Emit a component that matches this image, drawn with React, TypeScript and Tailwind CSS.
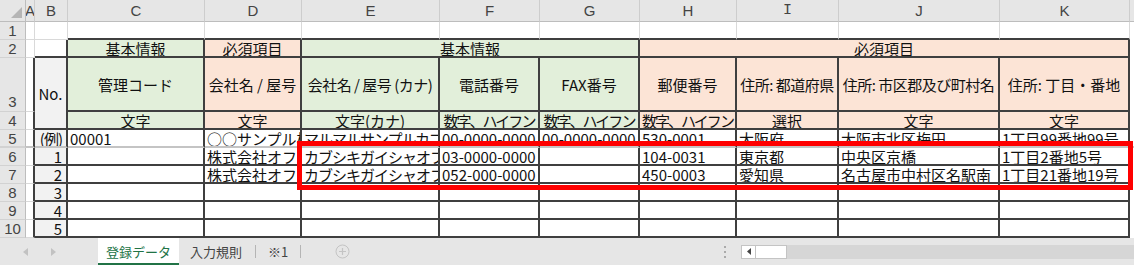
import type { ReactNode } from "react";

const cx = (...c: (string | false | undefined)[]) => c.filter(Boolean).join(" ");

const GREEN = "bg-[#e2efda]";
const PEACH = "bg-[#fce4d6]";
const NUMBG = "bg-[#f2f2f2]";

// cell borders: tb = table (dark), gl = sheet gridline
const tb = "border-r-2 border-b-2 border-r-[#3f3f3f] border-b-[#3f3f3f]";
const tbFreeze = "border-r-2 border-b-2 border-r-[#3f3f3f] border-b-[#c4c4c4]";
const gl = "border-r border-b border-r-[#d9d9d9] border-b-[#d9d9d9]";
const rh = "justify-center bg-[#e6e6e6] border-r border-b border-r-[#bdbdbd] border-b-[#d2d2d2] font-['Liberation_Sans',sans-serif] text-[15px] text-[#444]";

function Cell({ className, children }: { className?: string; children?: ReactNode }) {
  return (
    <div className={cx("flex min-w-0 items-center overflow-hidden whitespace-nowrap leading-[15px]", className)}>
      {children}
    </div>
  );
}

const COLS = ["A", "B", "C", "D", "E", "F", "G", "H", "I", "J", "K"];

type Row = { no: string; c?: string; d?: string; e?: string; f?: string; g?: string; h?: string; i?: string; j?: string; k?: string };

const ROWS: Row[] = [
  {
    no: "(例)",
    c: "00001",
    d: "○○サンプル株式会社",
    e: "マルマルサンプルカブシキガイシャ",
    f: "00-0000-0000",
    g: "00-0000-0000",
    h: "530-0001",
    i: "大阪府",
    j: "大阪市北区梅田",
    k: "1丁目99番地99号",
  },
  {
    no: "1",
    d: "株式会社オフィスサンプル",
    e: "カブシキガイシャオフィスサンプル",
    f: "03-0000-0000",
    h: "104-0031",
    i: "東京都",
    j: "中央区京橋",
    k: "1丁目2番地5号",
  },
  {
    no: "2",
    d: "株式会社オフィスサンプル",
    e: "カブシキガイシャオフィスサンプル",
    f: "052-000-0000",
    h: "450-0003",
    i: "愛知県",
    j: "名古屋市中村区名駅南",
    k: "1丁目21番地19号",
  },
  { no: "3" },
  { no: "4" },
  { no: "5" },
];

function Sheet() {
  return (
    <div className="grid grid-cols-[26px_9px_33px_137px_97px_138px_100px_100px_97px_102px_161px_130px_1fr] grid-rows-[22px_18px_18px_54px_18px_18px_18px_18px_18px_18px_18px] bg-white font-['Noto_Sans_CJK_JP',sans-serif] text-[15px] text-[#111]">
      {/* column headers */}
      <Cell className="justify-end items-end bg-[#e6e6e6] border-r border-b border-r-[#bdbdbd] border-b-[#bdbdbd] pr-[3px] pb-[3px]">
        <svg width="11" height="11" viewBox="0 0 11 11">
          <polygon points="11,0 11,11 0,11" fill="#b5b5b5" />
        </svg>
      </Cell>
      {COLS.map((l) => (
        <Cell
          key={l}
          className={cx(
            "justify-center bg-[#e6e6e6] border-r border-b border-r-[#cdcdcd] border-b-[#bdbdbd] text-[15px] text-[#444]",
            l === "I" ? "font-['Liberation_Mono',monospace]" : "font-['Liberation_Sans',sans-serif]",
          )}
        >
          {l}
        </Cell>
      ))}
      <Cell className="bg-[#e6e6e6] border-b border-b-[#bdbdbd]" />

      {/* row 1 */}
      <Cell className={rh}>1</Cell>
      <Cell className={gl} />
      <Cell className={gl} />
      {COLS.slice(2).map((l) => (
        <Cell key={l} className="border-r border-b-2 border-r-[#d9d9d9] border-b-[#3f3f3f]" />
      ))}
      <Cell />

      {/* row 2 */}
      <Cell className={rh}>2</Cell>
      <Cell className={gl} />
      <Cell className={tb} />
      <Cell className={cx(tb, GREEN, "justify-center")}>基本情報</Cell>
      <Cell className={cx(tb, PEACH, "justify-center")}>必須項目</Cell>
      <Cell className={cx(tb, GREEN, "col-span-3 justify-center")}>基本情報</Cell>
      <Cell className={cx(tb, PEACH, "col-span-4 justify-center")}>必須項目</Cell>
      <Cell />

      {/* row 3 */}
      <Cell className={cx(rh, "items-end pb-[2px]")}>3</Cell>
      <Cell className="border-r-2 border-b border-r-[#3f3f3f] border-b-[#d9d9d9]" />
      <Cell className={cx(tb, NUMBG, "row-span-2 justify-center")}>No.</Cell>
      <Cell className={cx(tb, GREEN, "justify-center")}>管理コード</Cell>
      <Cell className={cx(tb, PEACH, "justify-center")}>会社名 / 屋号</Cell>
      <Cell className={cx(tb, GREEN, "justify-center tracking-[-0.5px]")}>会社名 / 屋号 (カナ)</Cell>
      <Cell className={cx(tb, GREEN, "justify-center")}>電話番号</Cell>
      <Cell className={cx(tb, GREEN, "justify-center")}>FAX番号</Cell>
      <Cell className={cx(tb, PEACH, "justify-center")}>郵便番号</Cell>
      <Cell className={cx(tb, PEACH, "justify-center tracking-[-0.5px]")}>住所: 都道府県</Cell>
      <Cell className={cx(tb, PEACH, "justify-center tracking-[-0.5px]")}>住所: 市区郡及び町村名</Cell>
      <Cell className={cx(tb, PEACH, "justify-center")}>住所: 丁目・番地</Cell>
      <Cell />

      {/* row 4 */}
      <Cell className={rh}>4</Cell>
      <Cell className="border-r-2 border-b border-r-[#3f3f3f] border-b-[#d9d9d9]" />
      <Cell className={cx(tb, GREEN, "justify-center")}>文字</Cell>
      <Cell className={cx(tb, PEACH, "justify-center")}>文字</Cell>
      <Cell className={cx(tb, GREEN, "justify-center")}>文字(カナ)</Cell>
      <Cell className={cx(tb, GREEN, "justify-center tracking-[-2px]")}>数字、ハイフン</Cell>
      <Cell className={cx(tb, GREEN, "justify-center tracking-[-2px]")}>数字、ハイフン</Cell>
      <Cell className={cx(tb, PEACH, "justify-center tracking-[-2px]")}>数字、ハイフン</Cell>
      <Cell className={cx(tb, PEACH, "justify-center")}>選択</Cell>
      <Cell className={cx(tb, PEACH, "justify-center")}>文字</Cell>
      <Cell className={cx(tb, PEACH, "justify-center")}>文字</Cell>
      <Cell />

      {/* rows 5-10 */}
      {ROWS.map((r, idx) => {
        const freeze = idx === 0;
        const b = freeze ? tbFreeze : tb;
        const txt = "pl-[2px]";
        return [
          <Cell key={`rh${idx}`} className={cx(rh, freeze && "border-b-2 border-b-[#c4c4c4]")}>
            {idx + 5}
          </Cell>,
          <Cell
            key={`a${idx}`}
            className={cx(
              "border-r-2 border-r-[#3f3f3f]",
              freeze ? "border-b-2 border-b-[#c4c4c4]" : "border-b border-b-[#d9d9d9]",
            )}
          />,
          <Cell key={`b${idx}`} className={cx(b, NUMBG, "justify-end pr-[4px]", freeze && "tracking-[-1px]")}>
            {r.no}
          </Cell>,
          <Cell key={`c${idx}`} className={cx(b, txt)}>{r.c}</Cell>,
          <Cell key={`d${idx}`} className={cx(b, txt)}>{r.d}</Cell>,
          <Cell key={`e${idx}`} className={cx(b, txt, "tracking-[-1px]")}>{r.e}</Cell>,
          <Cell key={`f${idx}`} className={cx(b, txt)}>{r.f}</Cell>,
          <Cell key={`g${idx}`} className={cx(b, txt)}>{r.g}</Cell>,
          <Cell key={`h${idx}`} className={cx(b, txt)}>{r.h}</Cell>,
          <Cell key={`i${idx}`} className={cx(b, txt)}>{r.i}</Cell>,
          <Cell key={`j${idx}`} className={cx(b, txt)}>{r.j}</Cell>,
          <Cell key={`k${idx}`} className={cx(b, txt)}>{r.k}</Cell>,
          <Cell key={`z${idx}`} className={cx(freeze && "border-b-2 border-b-[#c4c4c4]")} />,
        ];
      })}
    </div>
  );
}

function TabBar() {
  return (
    <div className="flex h-[27px] items-stretch bg-[#e6e6e6] font-['Noto_Sans_CJK_JP',sans-serif] text-[13px] text-[#444]">
      <div className="flex w-[98px] items-center">
        <svg className="ml-[23px]" width="5" height="8" viewBox="0 0 5 8">
          <polygon points="5,0 5,8 0,4" fill="#c2c2c2" />
        </svg>
        <svg className="ml-[23px]" width="5" height="8" viewBox="0 0 5 8">
          <polygon points="0,0 0,8 5,4" fill="#c2c2c2" />
        </svg>
      </div>
      <div className="flex w-[81px] items-center justify-center border-b-2 border-[#217346] bg-white pt-[2px] text-[#217346]">
        登録データ
      </div>
      <div className="flex w-[76px] items-center justify-center pr-[2px]">入力規則</div>
      <div className="my-[7px] w-px bg-[#b5b5b5]" />
      <div className="flex w-[44px] items-center justify-center">※1</div>
      <div className="my-[7px] w-px bg-[#b5b5b5]" />
      <div className="w-[34px]" />
      <div className="flex items-center">
        <svg width="15" height="15" viewBox="0 0 15 15">
          <circle cx="7.5" cy="7.5" r="6.5" fill="none" stroke="#c4c4c4" strokeWidth="1" />
          <path d="M7.5 4v7M4 7.5h7" stroke="#c4c4c4" strokeWidth="1.2" />
        </svg>
      </div>
      <div className="flex-1" />
      <div className="flex w-[16px] flex-col items-center justify-center gap-[3px]">
        <span className="h-[2px] w-[2px] bg-[#aaa]" />
        <span className="h-[2px] w-[2px] bg-[#aaa]" />
        <span className="h-[2px] w-[2px] bg-[#aaa]" />
      </div>
      <div className="w-[8px]" />
      <div className="my-auto flex h-[14px] w-[393px] bg-[#d6d6d6]">
        <div className="flex w-[15px] items-center justify-center border border-[#c4c4c4] bg-white">
          <svg width="4" height="7" viewBox="0 0 4 7">
            <polygon points="4,0 4,7 0,3.5" fill="#444" />
          </svg>
        </div>
        <div className="w-[31px] border border-l-0 border-[#c4c4c4] bg-white" />
      </div>
    </div>
  );
}

export default function App() {
  return (
    <div className="relative h-[265px] w-[1134px] overflow-hidden bg-white">
      <Sheet />
      <TabBar />
      <div className="pointer-events-none absolute left-[297px] top-[141px] h-[49px] w-[836px] border-[5px] border-[#ff0000]" />
    </div>
  );
}
